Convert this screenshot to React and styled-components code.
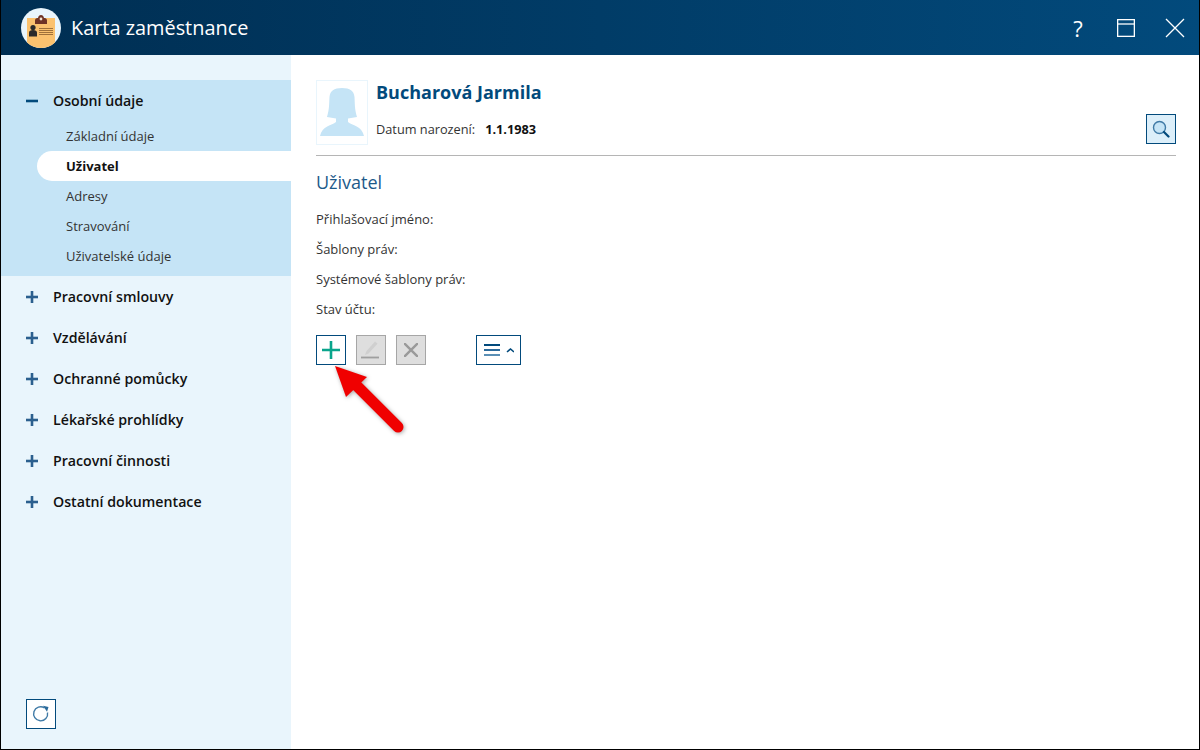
import React from "react";
import styled, { createGlobalStyle } from "styled-components";

const GlobalStyle = createGlobalStyle`
  html, body {
    margin: 0;
    padding: 0;
    height: 100%;
    background: #fff;
  }
  body {
    font-family: "Open Sans", "Liberation Sans", sans-serif;
  }
  * {
    box-sizing: border-box;
  }
`;

const NAV_GROUPS = [
  "Pracovní smlouvy",
  "Vzdělávání",
  "Ochranné pomůcky",
  "Lékařské prohlídky",
  "Pracovní činnosti",
  "Ostatní dokumentace",
];

const SUB_ITEMS = [
  { label: "Základní údaje" },
  { label: "Uživatel", active: true },
  { label: "Adresy" },
  { label: "Stravování" },
  { label: "Uživatelské údaje" },
];

const FIELDS = [
  "Přihlašovací jméno:",
  "Šablony práv:",
  "Systémové šablony práv:",
  "Stav účtu:",
];

const App = () => {
  return (
    <>
      <GlobalStyle />
      <Window>
        <TitleBar>
          <TitleLeft>
            <AppLogo />
            <WindowTitle>Karta zaměstnance</WindowTitle>
          </TitleLeft>
          <TitleControls>
            <HelpMark>?</HelpMark>
            <MaximizeIcon />
            <CloseIcon />
          </TitleControls>
        </TitleBar>
        <Body>
          <Sidebar>
            <OpenGroup>
              <GroupHead>
                <ToggleIcon open />
                <span>Osobní údaje</span>
              </GroupHead>
              {SUB_ITEMS.map((item) => (
                <SubItem key={item.label} $active={item.active}>
                  {item.label}
                </SubItem>
              ))}
            </OpenGroup>
            {NAV_GROUPS.map((label) => (
              <GroupHead key={label}>
                <ToggleIcon />
                <span>{label}</span>
              </GroupHead>
            ))}
            <SidebarFooter>
              <IconButton $bg="#fff" aria-label="Obnovit">
                <RefreshIcon />
              </IconButton>
            </SidebarFooter>
          </Sidebar>
          <Main>
            <PersonHeader>
              <Avatar>
                <AvatarIcon />
              </Avatar>
              <PersonInfo>
                <PersonName>Bucharová Jarmila</PersonName>
                <BirthRow>
                  <BirthLabel>Datum narození:</BirthLabel>
                  <BirthValue>1.1.1983</BirthValue>
                </BirthRow>
              </PersonInfo>
              <SearchButton $bg="#dceffa" aria-label="Hledat">
                <SearchIcon />
              </SearchButton>
            </PersonHeader>
            <SectionTitle>Uživatel</SectionTitle>
            <FieldList>
              {FIELDS.map((field) => (
                <FieldLabel key={field}>{field}</FieldLabel>
              ))}
            </FieldList>
            <Toolbar>
              <AddWrap>
                <IconButton $bg="#fff" aria-label="Přidat">
                  <PlusIcon />
                </IconButton>
                <Pointer />
              </AddWrap>
              <DisabledButton aria-label="Upravit">
                <PencilIcon />
              </DisabledButton>
              <DisabledButton aria-label="Smazat">
                <CrossIcon />
              </DisabledButton>
              <MenuButton aria-label="Menu">
                <MenuIcon />
              </MenuButton>
            </Toolbar>
          </Main>
        </Body>
      </Window>
    </>
  );
};

const AppLogo = () => (
  <svg width="40" height="40" viewBox="0 0 40 40">
    <circle cx="20" cy="20" r="20" fill="#e9f5fc" />
    <path d="M6 10h28v24.500A20 20 0 0 1 20 40a20 20 0 0 1-14-5.500z" fill="#fbc26f" />
    <path d="M14 16v-3.500c0-1.500 1-2.500 2.500-2.500h.5c.3-2 1.500-3 3-3s2.700 1 3 3h.5c1.500 0 2.500 1 2.500 2.500V16z" fill="#6f3325" />
    <circle cx="20" cy="11" r="1.400" fill="#f3e3d3" />
    <circle cx="12" cy="19.500" r="2.600" fill="#2b2b2b" />
    <path d="M8 28.500v-4c0-1.500 1.500-2.500 4-2.500s4 1 4 2.500v4z" fill="#2b2b2b" />
    <path d="M18 20.500h14M18 22.500h14M18 24.500h14M18 26.500h14" stroke="#a0713a" strokeWidth="1" />
  </svg>
);

const MaximizeIcon = () => (
  <svg width="18" height="18" viewBox="0 0 18 18" fill="none" stroke="#fff" strokeWidth="1.300">
    <rect x="0.650" y="0.650" width="16.700" height="16.700" />
    <path d="M1 5h16" />
  </svg>
);

const CloseIcon = () => (
  <svg width="20" height="20" viewBox="0 0 20 20" fill="none" stroke="#fff" strokeWidth="1.300">
    <path d="M1 1l18 18M19 1L1 19" />
  </svg>
);

const ToggleIcon = ({ open }) => (
  <ToggleSvg width="12" height="12" viewBox="0 0 12 12" fill="none" stroke="#2b5f8e" strokeWidth="2.600">
    <path d="M0 6h12" stroke={open ? "#024a7c" : "#2b5f8e"} />
    {!open && <path d="M6 0v12" />}
  </ToggleSvg>
);

const AvatarIcon = () => (
  <svg width="44" height="48" viewBox="0 0 44 48">
    <path
      d="M22 0c-8 0-12 3-12.500 9-.4 6 0 12-2.500 20l9 1.500v3.500C12 37.500 2 38 0 48h44c-2-10-12-10.500-16-14v-3.500l9-1.500c-2.500-8-2.100-14-2.500-20C34 3 30 0 22 0z"
      fill="#c5e4f6"
    />
  </svg>
);

const SearchIcon = () => (
  <svg width="18" height="18" viewBox="0 0 18 18" fill="none">
    <circle cx="7.500" cy="7.500" r="6" fill="#c5e4f6" stroke="#3f7aa6" strokeWidth="1.400" />
    <path d="M12 12l4.500 4.500" stroke="#024a7c" strokeWidth="2.200" strokeLinecap="round" />
  </svg>
);

const RefreshIcon = () => (
  <svg width="18" height="18" viewBox="0 0 18 18" fill="none">
    <path d="M15.500 7.500A7 7 0 1 1 12.500 3" stroke="#3f7aa6" strokeWidth="1.400" />
    <path d="M11 .8l5.500 1.200-1.500 4.800z" fill="#2b6a9b" />
  </svg>
);

const PlusIcon = () => (
  <svg width="18" height="18" viewBox="0 0 18 18" stroke="#0aa58c" strokeWidth="2.600">
    <path d="M0 9h18M9 0v18" />
  </svg>
);

const PencilIcon = () => (
  <svg width="20" height="20" viewBox="0 0 20 20" fill="none">
    <path d="M4 15l1.500-4L14 1.500l2.500 2.200L7.500 13.500z" fill="#cfcfcf" />
    <path d="M0 17.500h18" stroke="#9f9f9f" strokeWidth="1.800" />
  </svg>
);

const CrossIcon = () => (
  <svg width="14" height="14" viewBox="0 0 14 14" stroke="#9a9a9a" strokeWidth="2.400">
    <path d="M0 0l14 14M14 0L0 14" />
  </svg>
);

const MenuIcon = () => (
  <svg width="30" height="14" viewBox="0 0 30 14" fill="none">
    <path d="M0 2h16" stroke="#024a7c" strokeWidth="2" />
    <path d="M0 7h16" stroke="#2b6a9b" strokeWidth="2" />
    <path d="M0 12h16" stroke="#5a8fb5" strokeWidth="2" />
    <path d="M23 9l3.500-3 3.500 3" stroke="#024a7c" strokeWidth="1.600" />
  </svg>
);

const Pointer = () => (
  <PointerSvg width="92" height="72" viewBox="0 0 92 72">
    <path d="M82 62L34 14" stroke="#f00000" strokeWidth="11" strokeLinecap="round" />
    <path d="M19 1L30 32 51 12z" fill="#f00000" />
  </PointerSvg>
);

const Window = styled.div`
  width: 1200px;
  height: 750px;
  display: flex;
  flex-direction: column;
  overflow: hidden;
  border: 1px solid #000;
  border-top: 0;
`;

const TitleBar = styled.header`
  height: 55px;
  margin: 0 -1px;
  flex-shrink: 0;
  display: flex;
  align-items: center;
  justify-content: space-between;
  padding: 0 15px 0 21px;
  background: linear-gradient(90deg, #002e52 0%, #024a7c 100%);
`;

const TitleLeft = styled.div`
  display: flex;
  align-items: center;
  gap: 10px;
`;

const WindowTitle = styled.h1`
  margin: 0;
  font-size: 19.900px;
  font-weight: 400;
  color: #fff;
`;

const TitleControls = styled.div`
  display: flex;
  align-items: center;
  gap: 30px;
`;

const HelpMark = styled.span`
  width: 18px;
  font-size: 22px;
  line-height: 30px;
  text-align: center;
  color: #fff;
`;

const Body = styled.div`
  flex: 1;
  display: flex;
  min-height: 0;
`;

const Sidebar = styled.nav`
  width: 290px;
  padding-top: 25px;
  display: flex;
  flex-direction: column;
  background: #e9f5fc;
`;

const OpenGroup = styled.div`
  padding-bottom: 5px;
  background: #c5e4f6;
`;

const GroupHead = styled.div`
  height: 41px;
  display: flex;
  align-items: center;
  gap: 15px;
  padding-left: 25px;
  font-size: 14.200px;
  font-weight: 600;
  color: #111;
`;

const ToggleSvg = styled.svg`
  flex-shrink: 0;
`;

const SubItem = styled.div`
  height: 30px;
  margin-left: 36px;
  padding-left: 29px;
  display: flex;
  align-items: center;
  font-size: 13px;
  font-weight: ${(p) => (p.$active ? 700 : 400)};
  color: ${(p) => (p.$active ? "#111" : "#333")};
  background: ${(p) => (p.$active ? "#fff" : "transparent")};
  border-radius: 15px 0 0 15px;
`;

const SidebarFooter = styled.div`
  margin-top: auto;
  padding: 0 0 20px 25px;
`;

const IconButton = styled.button`
  width: 30px;
  height: 30px;
  padding: 0;
  flex-shrink: 0;
  display: flex;
  align-items: center;
  justify-content: center;
  border: 1px solid #024a7c;
  background: ${(p) => p.$bg};
`;

const SearchButton = styled(IconButton)`
  margin-bottom: 1px;
`;

const DisabledButton = styled.button`
  width: 30px;
  height: 30px;
  padding: 0;
  display: flex;
  align-items: center;
  justify-content: center;
  border: 1px solid #a6a6a6;
  background: #dedede;
`;

const MenuButton = styled(IconButton)`
  width: 45px;
  margin-left: 40px;
  background: #fff;
`;

const Main = styled.main`
  flex: 1;
  padding: 25px 23px 0 25px;
  background: #fff;
`;

const PersonHeader = styled.div`
  display: flex;
  align-items: flex-end;
  padding-bottom: 10px;
  border-bottom: 1px solid #b5b5b5;
`;

const Avatar = styled.div`
  width: 52px;
  height: 65px;
  margin-right: 8px;
  display: flex;
  align-items: flex-end;
  justify-content: center;
  padding-bottom: 8px;
  border: 1px solid #e9f5fc;
`;

const PersonInfo = styled.div`
  flex: 1;
  align-self: stretch;
  display: flex;
  flex-direction: column;
`;

const PersonName = styled.div`
  font-size: 18px;
  line-height: 24px;
  font-weight: 700;
  color: #024a7c;
`;

const BirthRow = styled.div`
  margin-top: 15px;
  display: flex;
  gap: 10px;
  font-size: 12.750px;
  line-height: 20px;
`;

const BirthLabel = styled.span`
  color: #333;
`;

const BirthValue = styled.span`
  font-weight: 700;
  color: #111;
`;

const SectionTitle = styled.h2`
  margin: 14px 0 0;
  font-size: 18px;
  line-height: 24px;
  font-weight: 400;
  color: #1d5a8a;
`;

const FieldList = styled.div`
  margin-top: 10px;
  display: flex;
  flex-direction: column;
`;

const FieldLabel = styled.div`
  height: 30px;
  display: flex;
  align-items: center;
  font-size: 13px;
  color: #333;
`;

const Toolbar = styled.div`
  margin-top: 11px;
  display: flex;
  gap: 10px;
`;

const AddWrap = styled.div`
  position: relative;
`;

const PointerSvg = styled.svg`
  position: absolute;
  left: 0;
  top: 30px;
  overflow: visible;
  filter: drop-shadow(1px 1px 2px rgba(0, 0, 0, 0.35));
`;

export default App;
